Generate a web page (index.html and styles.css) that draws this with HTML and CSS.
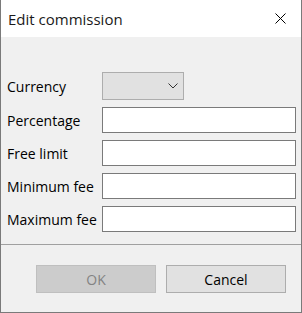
FILE: index.html
```html
<html>

<head>
    <meta http-equiv="Content-Type" content="text/html; charset=UTF-8">
    <link rel="stylesheet" href="styles.css">
</head>

<body>
    <div class="dialog">
        <header class="titlebar">
            <span class="title">Edit commission</span>
            <span class="close">
                <svg width="11" height="11" viewBox="0 0 11 11">
                    <path d="M0.5 0.5 L10.5 10.5 M10.5 0.5 L0.5 10.5" stroke="#000" stroke-width="1" fill="none" />
                </svg>
            </span>
        </header>

        <div class="content">
            <div class="form">
                <label class="label">Currency</label>
                <div class="combo">
                    <svg class="chevron" width="10" height="6" viewBox="0 0 10 6">
                        <path d="M0.5 0.5 L5 5 L9.5 0.5" stroke="#333" stroke-width="1" fill="none" />
                    </svg>
                </div>

                <label class="label">Percentage</label>
                <div class="textbox"></div>

                <label class="label">Free limit</label>
                <div class="textbox"></div>

                <label class="label">Minimum fee</label>
                <div class="textbox"></div>

                <label class="label">Maximum fee</label>
                <div class="textbox"></div>
            </div>

            <footer class="buttons">
                <div class="button button-disabled">OK</div>
                <div class="button">Cancel</div>
            </footer>
        </div>
    </div>
</body>

</html>
```

FILE: styles.css
```css
body {
    margin: 0;
    font-family: "Segoe UI", "Open Sans", sans-serif;
    color: black;
}

.dialog {
    width: 302px;
    height: 313px;
    box-sizing: border-box;
    border: 1px solid #7a7a7a;
    border-top: none;
    display: flex;
    flex-direction: column;
}

.titlebar {
    height: 37px;
    background: white;
    display: flex;
    align-items: center;
    justify-content: space-between;
    padding: 0 15px 0 7px;
    flex-shrink: 0;
}

.title {
    font-size: 15px;
    color: #1a1a1a;
}

.close svg {
    display: block;
}

.content {
    flex: 1;
    background: #f0f0f0;
    display: flex;
    flex-direction: column;
}

.form {
    display: grid;
    grid-template-columns: 95px 194px;
    row-gap: 7px;
    padding: 35px 0 12px 6px;
    align-items: center;
}

.label {
    font-size: 14px;
    color: black;
}

.combo {
    width: 82px;
    height: 28px;
    box-sizing: border-box;
    background: #e1e1e1;
    border: 1px solid #adadad;
    display: flex;
    align-items: center;
    justify-content: flex-end;
    padding-right: 5px;
}

.chevron {
    display: block;
}

.textbox {
    height: 26px;
    box-sizing: border-box;
    background: white;
    border: 1px solid #7a7a7a;
}

.buttons {
    border-top: 1px solid #a0a0a0;
    display: flex;
    justify-content: flex-end;
    gap: 10px;
    padding: 20px 15px 0 0;
}

.button {
    width: 120px;
    height: 28px;
    box-sizing: border-box;
    background: #e1e1e1;
    border: 1px solid #adadad;
    display: flex;
    align-items: center;
    justify-content: center;
    font-size: 14px;
}

.button-disabled {
    background: #cccccc;
    border-color: #bfbfbf;
    color: #838383;
}
```
